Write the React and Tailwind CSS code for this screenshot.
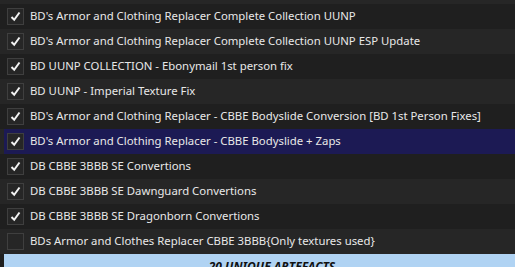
import React from 'react';

const mods = [
  { name: "BD's Armor and Clothing Replacer Complete Collection UUNP", on: true },
  { name: "BD's Armor and Clothing Replacer Complete Collection UUNP ESP Update", on: true },
  { name: 'BD UUNP COLLECTION - Ebonymail 1st person fix', on: true },
  { name: 'BD UUNP - Imperial Texture Fix', on: true },
  { name: "BD's Armor and Clothing Replacer - CBBE Bodyslide Conversion [BD 1st Person Fixes]", on: true },
  { name: "BD's Armor and Clothing Replacer - CBBE Bodyslide + Zaps", on: true, selected: true },
  { name: 'DB CBBE 3BBB SE Convertions', on: true },
  { name: 'DB CBBE 3BBB SE Dawnguard Convertions', on: true },
  { name: 'DB CBBE 3BBB SE Dragonborn Convertions', on: true },
  { name: 'BDs Armor and Clothes Replacer CBBE 3BBB{Only textures used}', on: false },
];

const Check = ({ on }) => (
  <div className="w-[17px] h-[17px] border border-[#3f3f3f] bg-[#262626] flex items-center justify-center shrink-0">
    {on && (
      <svg width="11" height="11" viewBox="0 0 11 11">
        <path d="M1.5 6 L4.2 8.8 L9.5 1.5" fill="none" stroke="#f2f2f2" strokeWidth="2" strokeLinejoin="miter" />
      </svg>
    )}
  </div>
);

const App = () => {
  return (
    <div className="w-[515px] h-[267px] overflow-hidden bg-[#1f1f1f] text-[#e8e8e8] text-[11.35px]" style={{ fontFamily: '"Noto Sans", "Open Sans", sans-serif' }}>
      <div className="h-[4px] bg-[#262626]" />
      {mods.map((m, i) => (
        <div key={i} className={`h-[25px] ${i % 2 === 0 ? 'bg-[#1f1f1f]' : 'bg-[#262626]'}`}>
          <div className={`h-full flex items-center gap-[6px] pl-[3px] ml-[4px] ${m.selected ? 'bg-[#1c1a54]' : ''}`}>
            <Check on={m.on} />
            <span className="whitespace-nowrap leading-none pb-[1px]">{m.name}</span>
          </div>
        </div>
      ))}
      <div className="ml-[4px] h-[30px] bg-[#b0d3f3] flex justify-center pt-[7px] pl-[25px]">
        <span className="font-bold italic text-[#111] text-[12px] leading-none">20 UNIQUE ARTEFACTS</span>
      </div>
    </div>
  );
};

export default App;
